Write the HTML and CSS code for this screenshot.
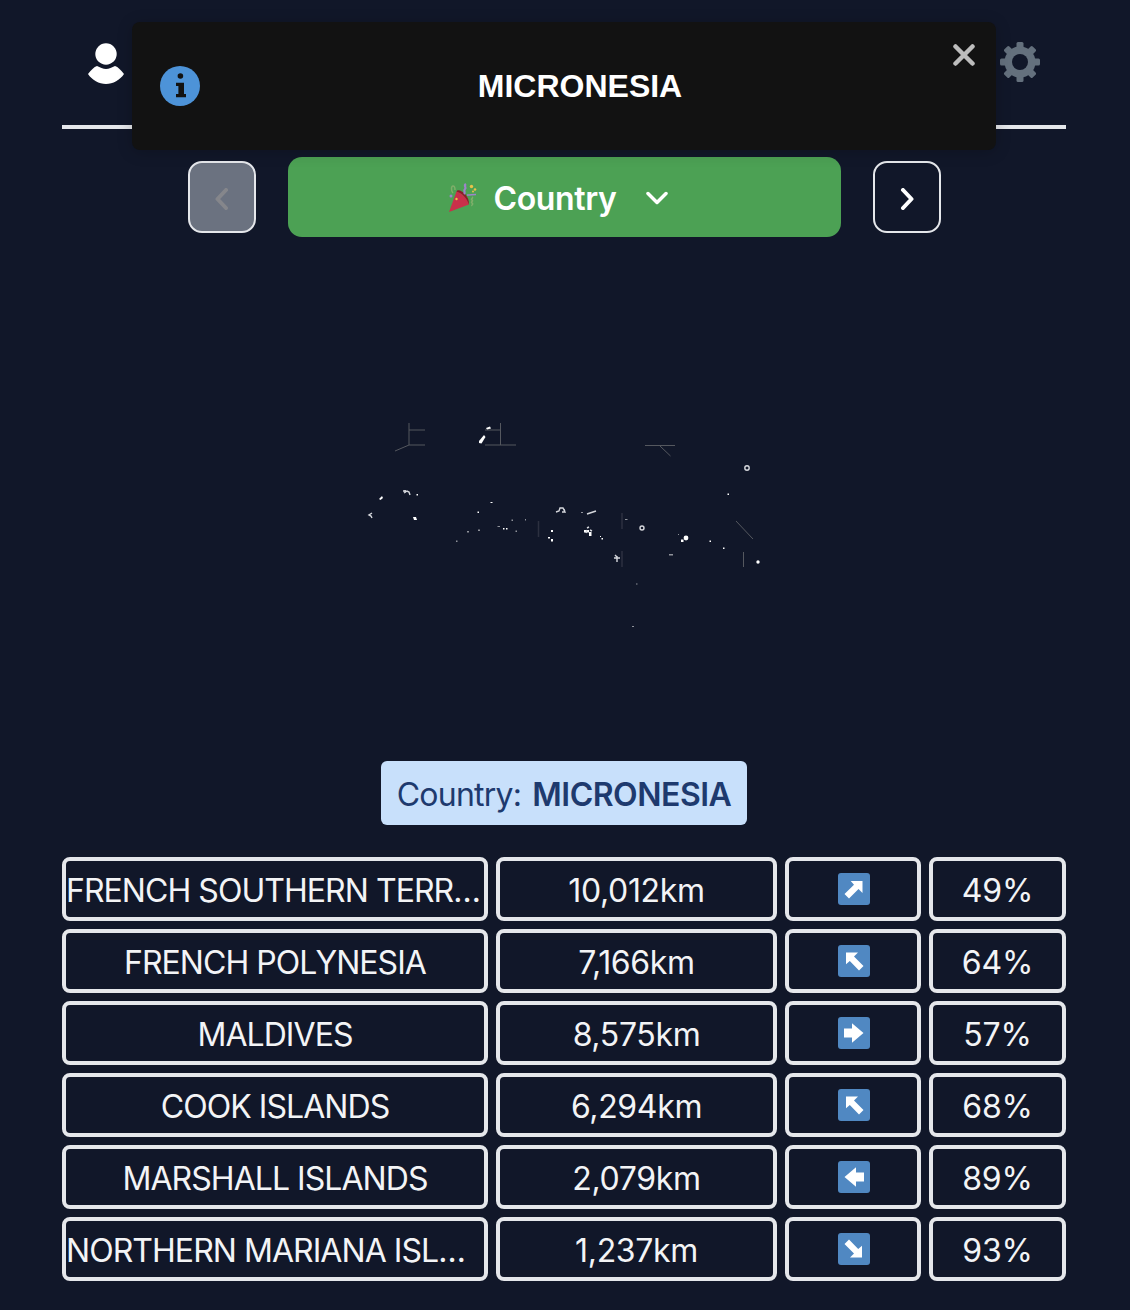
FILE: index.html
```html
<!DOCTYPE html>
<html lang="en">
<head>
    <meta charset="UTF-8">
    <title>Country guess</title>
    <link rel="stylesheet" href="styles.css">
</head>
<body>
    <div class="toast">
        <svg class="toast-icon" width="40" height="40" viewBox="0 0 40 40">
            <circle cx="20" cy="20" r="20" fill="#4d93d8"/>
            <circle cx="20.4" cy="10" r="2.8" fill="#121212"/>
            <path d="M16 16.7h8v11.4h2v3.2H16v-3.2h2.4v-8.2H16z" fill="#121212"/>
        </svg>
        <div class="toast-title">MICRONESIA</div>
        <svg class="toast-close" width="22" height="22" viewBox="0 0 22 22">
            <path d="M2.5 2.5l17 17M19.5 2.5l-17 17" stroke="#bdbdbd" stroke-width="4.5" stroke-linecap="round"/>
        </svg>
    </div>

    <div class="game">
        <div class="topbar">
            <svg width="36" height="42" viewBox="0 0 36 42">
                <circle cx="18" cy="11" r="10.7" fill="#fff"/>
                <path d="M0 31C3 27 6 24 9 23C12 24.5 15 26 18 26C21 26 24 24.5 27 23C30 24 33 27 36 31C32 37 25 41 18 41C11 41 4 37 0 31Z" fill="#fff"/>
            </svg>
            <svg width="40" height="40" viewBox="0 0 40 40">
                <g fill="#64707d">
                    <rect x="16.5" y="0" width="7" height="40" rx="1.5"/>
                    <rect x="16.5" y="0" width="7" height="40" rx="1.5" transform="rotate(45 20 20)"/>
                    <rect x="16.5" y="0" width="7" height="40" rx="1.5" transform="rotate(90 20 20)"/>
                    <rect x="16.5" y="0" width="7" height="40" rx="1.5" transform="rotate(135 20 20)"/>
                </g>
                <circle cx="20" cy="20" r="15.5" fill="#64707d"/>
                <circle cx="20" cy="20" r="8" fill="#111729"/>
            </svg>
        </div>

        <div class="picker">
            <button class="nav-btn disabled">
                <svg width="14" height="22" viewBox="0 0 14 22"><path d="M11 2L2.5 11L11 20" fill="none" stroke="#85868b" stroke-width="4" stroke-linecap="round" stroke-linejoin="round"/></svg>
            </button>
            <button class="mode-btn">
                <svg width="32" height="32" viewBox="0 0 32 32">
                    <path d="M2 30L9.500 9.500C14 10 21 17 22 22.500Z" fill="#c9304a"/>
                    <path d="M9.500 9.500C11 5 23 13 22 22.500C20 16 15 11 9.500 9.500Z" fill="#8e1a28"/>
                    <path d="M19 2c-3 2 1 3-1 5s1 3-1 5" fill="none" stroke="#9d84c9" stroke-width="2.200"/>
                    <path d="M20 13c3 0 6-.5 9-.5" fill="none" stroke="#9d84c9" stroke-width="1.500"/>
                    <path d="M6 11c-2-2-2-7 0-7s2 3 2 4" fill="none" stroke="#7fae6a" stroke-width="1.500"/>
                    <path d="M25 15c2 1-2 2 0 3s-2 2 0 3 -1 2 0 3" fill="none" stroke="#7fae6a" stroke-width="1.500"/>
                    <circle cx="24.500" cy="4.500" r="1.700" fill="#e8c24a"/>
                    <circle cx="28" cy="7.500" r="1.300" fill="#e8c24a"/>
                    <circle cx="26" cy="9.500" r="1" fill="#e8c24a"/>
                    <circle cx="4" cy="14" r="1.500" fill="#9d84c9"/>
                    <circle cx="9.500" cy="17" r="1.200" fill="#e8c24a"/>
                </svg>
                <span class="mode-label">Country</span>
                <svg width="22" height="14" viewBox="0 0 22 14"><path d="M2 2.500L11 11.500L20 2.500" fill="none" stroke="#fff" stroke-width="3.500" stroke-linecap="round" stroke-linejoin="round"/></svg>
            </button>
            <button class="nav-btn">
                <svg width="14" height="22" viewBox="0 0 14 22"><path d="M3 2L11.500 11L3 20" fill="none" stroke="#fff" stroke-width="4" stroke-linecap="round" stroke-linejoin="round"/></svg>
            </button>
        </div>

        <svg class="map" width="1004" height="524" viewBox="62 237 1004 524">
            <g fill="none" stroke="#55585f" stroke-width="1">
                <path d="M409 423V445M409 430H425M409 445H425M409 445L395 451"/>
                <path d="M500.500 423V445M485 430H500.500M485 445H516"/>
                <path d="M645 445.500H675M660 446L670.500 456"/>
                <path d="M736 521L753 539M743.500 552V567"/>
            </g>
            <path d="M538.500 521V537M622 513V529M622 551V567" fill="none" stroke="#2c3040" stroke-width="1.500"/>
            <g fill="#fff">
                <path d="M479 441L484 435L485.500 437L481.500 443.500L479 443Z"/>
                <path d="M486 428L490 426.500L491 428.500L487 429.500Z"/>
                <path d="M379 499L382 496L383 498L380.500 500Z"/>
                <path d="M413 517H416L417 520H414Z"/>
                <circle cx="686" cy="538" r="2.400"/>
                <rect x="681" y="539.500" width="2.500" height="2.500"/>
                <circle cx="758" cy="562" r="1.700"/>
                <rect x="416.500" y="494" width="1.500" height="1.500"/>
                <rect x="727.500" y="493.500" width="1.500" height="1.500"/>
                <rect x="709.500" y="540.500" width="1.500" height="1.500"/>
                <rect x="723" y="547.500" width="1.500" height="1.500"/>
                <rect x="477.500" y="511.500" width="1.500" height="1.500"/>
                <rect x="490.500" y="502" width="2" height="1"/>
                <rect x="503" y="528" width="1.500" height="1.500"/>
                <rect x="506" y="528" width="1.500" height="1.500"/>
                <rect x="551" y="530" width="2" height="2"/>
                <rect x="548" y="537" width="2" height="1.500"/>
                <rect x="551" y="539" width="2" height="2.500"/>
                <rect x="584" y="530" width="5" height="2.500"/>
                <rect x="589" y="532" width="2.500" height="4"/>
                <rect x="600" y="536" width="1" height="1"/>
                <rect x="601.500" y="538" width="1.500" height="1.500"/>
            </g>
            <g fill="none" stroke="#d5d7dc" stroke-width="1.400">
                <circle cx="747" cy="468" r="2.200"/>
                <circle cx="642" cy="528" r="2"/>
                <path d="M403 491h3M404 493l3-2 2 1 1 3M405 490v3"/>
                <path d="M372 513l-3 2 2 1 1 2"/>
                <path d="M556 512l3-1 1-3 3 0 2 4h-3M565 512l-1-3"/>
                <path d="M587 528l2-1M586 533l1-3M590 530l2 1"/>
                <path d="M614 558h6M617 556v6M615 555l2 2"/>
                <path d="M587 514l9-3"/>
            </g>
            <g fill="#8f929a">
                <rect x="467" y="531" width="2" height="1.500"/>
                <rect x="456" y="540.500" width="1.500" height="1.500"/>
                <rect x="478" y="529.500" width="2" height="1.500"/>
                <rect x="497.500" y="526" width="2.500" height="1"/>
                <rect x="511.500" y="519.500" width="1.500" height="1.500"/>
                <rect x="525" y="519" width="1" height="1.500"/>
                <rect x="515.500" y="530.500" width="1.500" height="1.500"/>
                <rect x="581" y="512" width="2" height="1"/>
                <rect x="625" y="519" width="2.500" height="1"/>
                <rect x="669" y="554" width="4" height="1.500"/>
                <rect x="678" y="534" width="1" height="1"/>
                <rect x="636" y="583.500" width="1.500" height="1"/>
                <rect x="632" y="626" width="2" height="1"/>
            </g>
        </svg>

        <div class="answer-wrap">
            <div class="answer"><span class="answer-key">Country:</span> <b>MICRONESIA</b></div>
        </div>

        <div class="guesses">
            <div class="guess">
                <div class="cell name">FRENCH SOUTHERN TERRITORIES</div>
                <div class="cell dist">10,012km</div>
                <div class="cell dir">
                    <svg width="32" height="32" viewBox="0 0 32 32"><rect width="32" height="32" rx="3" fill="#5088c2"/><path d="M12.700 8H24.500V20L20.500 16L11 25.500L6.500 21L16 11.800Z" fill="#fff"/></svg>
                </div>
                <div class="cell pct">49%</div>
            </div>
            <div class="guess">
                <div class="cell name">FRENCH POLYNESIA</div>
                <div class="cell dist">7,166km</div>
                <div class="cell dir">
                    <svg width="32" height="32" viewBox="0 0 32 32"><rect width="32" height="32" rx="3" fill="#5088c2"/><path d="M12.700 8H24.500V20L20.500 16L11 25.500L6.500 21L16 11.800Z" fill="#fff" transform="rotate(-90 16 16)"/></svg>
                </div>
                <div class="cell pct">64%</div>
            </div>
            <div class="guess">
                <div class="cell name">MALDIVES</div>
                <div class="cell dist">8,575km</div>
                <div class="cell dir">
                    <svg width="32" height="32" viewBox="0 0 32 32"><rect width="32" height="32" rx="3" fill="#5088c2"/><path d="M6 11.500H14V6.300L25.500 16L14 25.700V20.500H6Z" fill="#fff"/></svg>
                </div>
                <div class="cell pct">57%</div>
            </div>
            <div class="guess">
                <div class="cell name">COOK ISLANDS</div>
                <div class="cell dist">6,294km</div>
                <div class="cell dir">
                    <svg width="32" height="32" viewBox="0 0 32 32"><rect width="32" height="32" rx="3" fill="#5088c2"/><path d="M12.700 8H24.500V20L20.500 16L11 25.500L6.500 21L16 11.800Z" fill="#fff" transform="rotate(-90 16 16)"/></svg>
                </div>
                <div class="cell pct">68%</div>
            </div>
            <div class="guess">
                <div class="cell name">MARSHALL ISLANDS</div>
                <div class="cell dist">2,079km</div>
                <div class="cell dir">
                    <svg width="32" height="32" viewBox="0 0 32 32"><rect width="32" height="32" rx="3" fill="#5088c2"/><path d="M6 11.500H14V6.300L25.500 16L14 25.700V20.500H6Z" fill="#fff" transform="rotate(180 16 16)"/></svg>
                </div>
                <div class="cell pct">89%</div>
            </div>
            <div class="guess">
                <div class="cell name">NORTHERN MARIANA ISLANDS</div>
                <div class="cell dist">1,237km</div>
                <div class="cell dir">
                    <svg width="32" height="32" viewBox="0 0 32 32"><rect width="32" height="32" rx="3" fill="#5088c2"/><path d="M12.700 8H24.500V20L20.500 16L11 25.500L6.500 21L16 11.800Z" fill="#fff" transform="rotate(90 16 16)"/></svg>
                </div>
                <div class="cell pct">93%</div>
            </div>
        </div>
    </div>
</body>
</html>
```

FILE: styles.css
```css
html, body {
    margin: 0;
    height: 100%;
    background: #111729;
    color: #f3f4f6;
    font-family: Inter, "Liberation Sans", Arial, sans-serif;
    font-size: 32px;
}

svg {
    display: block;
}

.toast {
    position: absolute;
    top: 22px;
    left: 132px;
    z-index: 10;
    box-sizing: border-box;
    display: flex;
    align-items: center;
    width: 864px;
    height: 128px;
    padding: 0 36px 0 28px;
    background: #121212;
    border-radius: 8px;
    box-shadow: 0 2px 16px rgba(0, 0, 0, 0.2);
}

.toast-icon {
    flex: none;
}

.toast-title {
    flex: 1;
    color: #fff;
    font-family: "Liberation Sans", Arial, sans-serif;
    font-size: 32px;
    font-weight: bold;
    text-align: center;
}

.toast-close {
    position: absolute;
    top: 22px;
    right: 21px;
}

.game {
    width: 1004px;
    margin-left: 62px;
}

.topbar {
    box-sizing: border-box;
    display: flex;
    justify-content: space-between;
    height: 129px;
    padding: 42px 26px 0;
    border-bottom: 4px solid #e5e7eb;
}

.topbar svg:first-child {
    margin-top: 1px;
}

.picker {
    display: flex;
    justify-content: center;
    align-items: center;
    gap: 32px;
    margin-top: 28px;
}

.nav-btn {
    display: flex;
    align-items: center;
    justify-content: center;
    width: 68px;
    height: 72px;
    padding: 4px 0 0;
    background: transparent;
    border: 2px solid #e5e7eb;
    border-radius: 14px;
}

.nav-btn.disabled {
    background: #6b7280;
}

.mode-btn {
    display: flex;
    align-items: center;
    justify-content: center;
    gap: 15px;
    width: 553px;
    height: 80px;
    padding: 2px 13px 0 0;
    color: #fff;
    background: #4ca154;
    border: 0;
    border-radius: 14px;
    font-family: inherit;
    font-size: 32px;
    font-weight: 600;
}

.mode-label {
    margin-right: 15px;
    letter-spacing: -0.4px;
}

.answer-wrap {
    display: flex;
    justify-content: center;
}

.answer {
    display: flex;
    gap: 11px;
    align-items: center;
    justify-content: center;
    width: 366px;
    height: 64px;
    padding-top: 2px;
    box-sizing: border-box;
    color: #1e3a6e;
    background: #c8e0fb;
    border-radius: 6px;
    white-space: nowrap;
}

.answer-key {
    letter-spacing: -0.75px;
}

.answer b {
    font-weight: 600;
    letter-spacing: -0.5px;
}

.guesses {
    display: flex;
    flex-direction: column;
    gap: 8px;
    margin-top: 32px;
}

.guess {
    display: grid;
    grid-template-columns: 426px 281px 136px 137px;
    gap: 8px;
}

.cell {
    box-sizing: border-box;
    height: 64px;
    line-height: 60px;
    border: 4px solid #e5e7eb;
    border-radius: 8px;
    text-align: center;
}

.name {
    overflow: hidden;
    white-space: nowrap;
    text-overflow: ellipsis;
    letter-spacing: -0.95px;
}

.dist {
    letter-spacing: -0.35px;
}

.pct {
    letter-spacing: -0.2px;
}

.dir {
    display: flex;
    align-items: center;
    justify-content: center;
    padding-left: 2px;
}
```
